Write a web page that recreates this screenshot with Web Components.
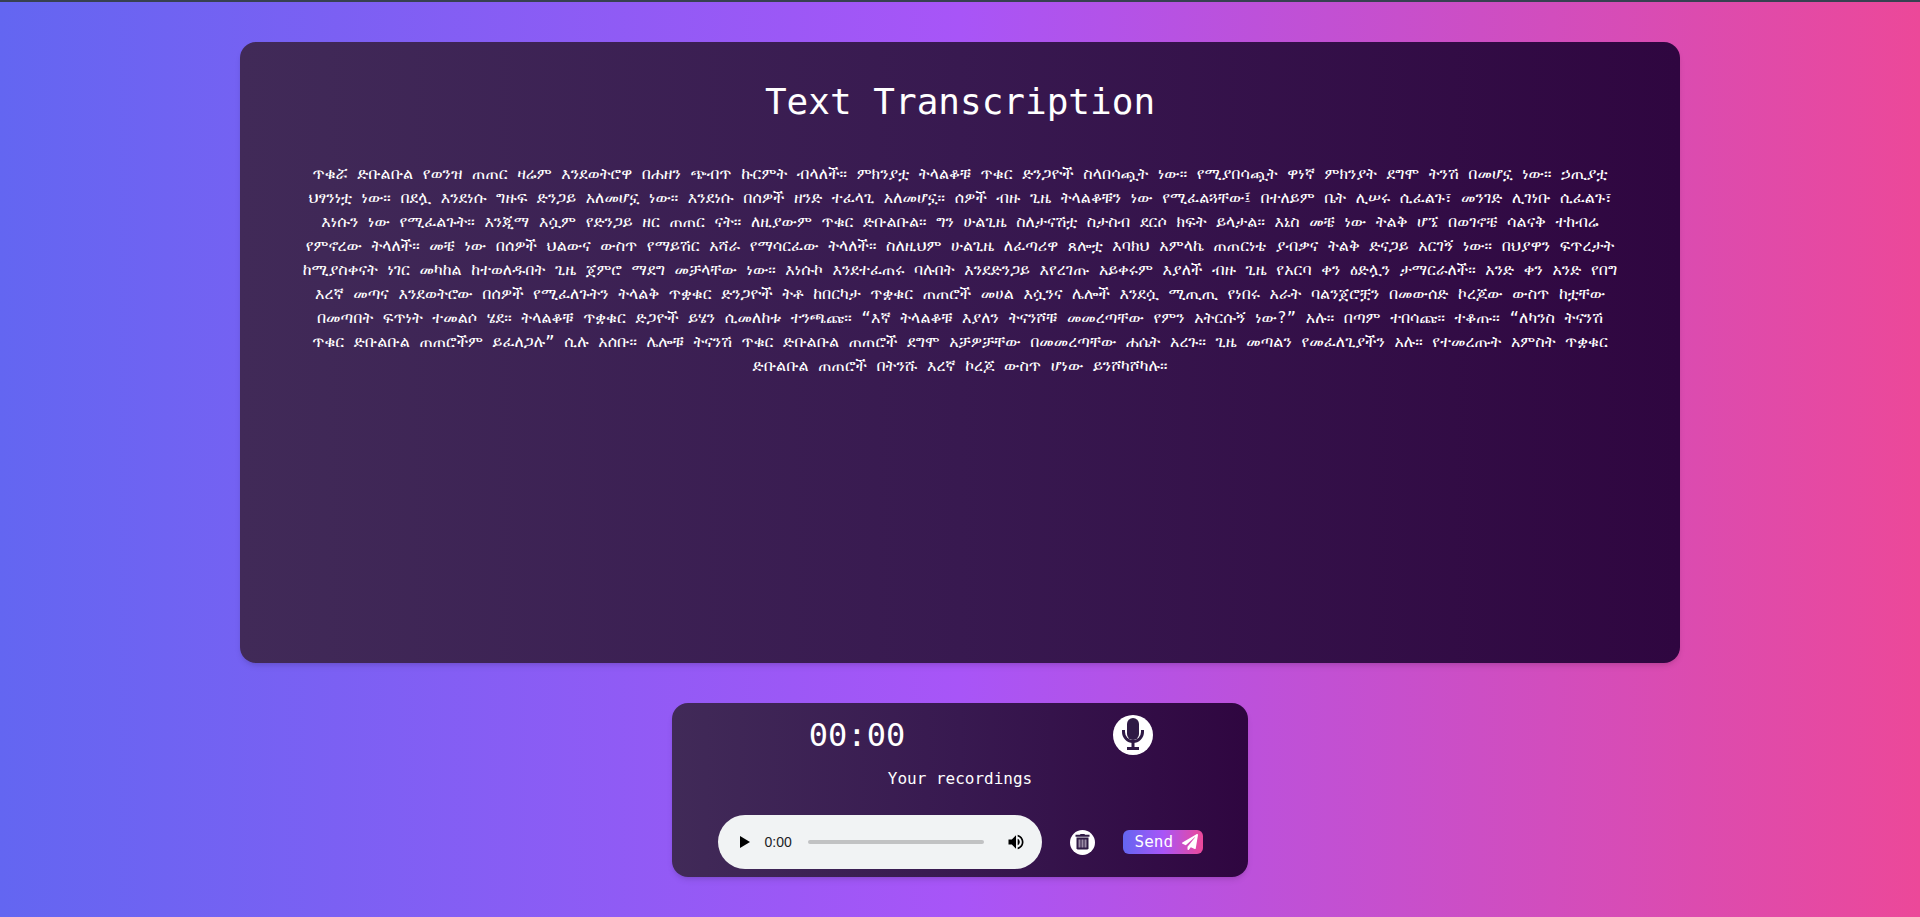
<!DOCTYPE html>
<html lang="am">
<head>
<meta charset="utf-8">
<meta name="viewport" content="width=device-width, initial-scale=1">
<title>Text Transcription</title>
<style>
  body { margin: 0; font: 16px/24px "DejaVu Sans Mono", FreeSerif, monospace; color: #fff; }
</style>
</head>
<body>
<transcription-app></transcription-app>

<template id="app-template">
  <style>
    :host {
      box-sizing: border-box; display: flex; flex-direction: column; align-items: center; gap: 40px;
      min-height: 100vh; padding: 40px 0; border-top: 2px solid #374151;
      background: linear-gradient(to right, #6366f1, #a855f7, #ec4899) border-box;
    }
    transcript-card { width: 75%; flex: 1; }
    recorder-card { width: 30%; min-width: 576px; }
  </style>
  <transcript-card>
    <span slot="title">Text Transcription</span>
    ጥቁሯ ድቡልቡል የወንዝ ጠጠር ዛሬም እንደወትሮዋ በሐዘን ጭብጥ ኩርምት ብላለች። ምክንያቷ ትላልቆቹ ጥቁር ድንጋዮች ስላበሳጯት ነው። የሚያበሳጯት ዋነኛ ምክንያት ደግሞ ትንሽ በመሆኗ ነው። ኃጢያቷ<br>
    ህፃንነቷ ነው። በደሏ እንደነሱ ግዙፍ ድንጋይ አለመሆኗ ነው። እንደነሱ በሰዎች ዘንድ ተፈላጊ አለመሆኗ። ሰዎች ብዙ ጊዜ ትላልቆቹን ነው የሚፈልጓቸው፤ በተለይም ቤት ሊሠሩ ሲፈልጉ፣ መንገድ ሊገነቡ ሲፈልጉ፣<br>
    እነሱን ነው የሚፈልጉት። እንጂማ እሷም የድንጋይ ዘር ጠጠር ናት። ለዚያውም ጥቁር ድቡልቡል። ግን ሁልጊዜ ስለታናሽቷ ስታስብ ደርሶ ክፍት ይላታል። እኔስ መቼ ነው ትልቅ ሆኜ በወገኖቼ ሳልናቅ ተከብሬ<br>
    የምኖረው ትላለች። መቼ ነው በሰዎች ህልውና ውስጥ የማይሽር አሻራ የማሳርፈው ትላለች። ስለዚህም ሁልጊዜ ለፈጣሪዋ ጸሎቷ እባክህ አምላኬ ጠጠርነቴ ያብቃና ትልቅ ድናጋይ አርገኝ ነው። በህያዋን ፍጥረታት<br>
    ከሚያስቀናት ነገር መካከል ከተወለዱበት ጊዜ ጀምሮ ማደግ መቻላቸው ነው። እነሱኮ እንደተፈጠሩ ባሉበት እንደድንጋይ እየረገጡ አይቀሩም እያለች ብዙ ጊዜ የአርባ ቀን ዕድሏን ታማርራለች። አንድ ቀን አንድ የበግ<br>
    እረኛ መጣና እንደወትሮው በሰዎች የሚፈለጉትን ትላልቅ ጥቋቁር ድንጋዮች ትቶ ከበርካታ ጥቋቁር ጠጠሮች መሀል እሷንና ሌሎች እንደሷ ሚጢጢ የነበሩ አራት ባልንጀሮቿን በመውሰድ ኮረጆው ውስጥ ከቷቸው<br>
    በመጣበት ፍጥነት ተመልሶ ሄደ። ትላልቆቹ ጥቋቁር ድጋዮች ይሄን ሲመለከቱ ተንጫጩ። “እኛ ትላልቆቹ እያለን ትናንሾቹ መመረጣቸው የምን አትርሱኝ ነው?” አሉ። በጣም ተበሳጩ። ተቆጡ። “ለካንስ ትናንሽ<br>
    ጥቁር ድቡልቡል ጠጠሮችም ይፈለጋሉ” ሲሉ አሰቡ። ሌሎቹ ትናንሽ ጥቁር ድቡልቡል ጠጠሮች ደግሞ አቻዎቻቸው በመመረጣቸው ሐሴት አረጉ። ጊዜ መጣልን የመፈለጊያችን አሉ። የተመረጡት አምስት ጥቋቁር<br>
    ድቡልቡል ጠጠሮች በትንሹ እረኛ ኮረጆ ውስጥ ሆነው ይንሾካሾካሉ።
  </transcript-card>
  <recorder-card></recorder-card>
</template>

<template id="transcript-template">
  <style>
    :host {
      box-sizing: border-box; display: block; padding: 40px; border-radius: 16px; text-align: center;
      background: linear-gradient(to right, #412a58, #381950, #2f0640);
      box-shadow: 0 4px 6px -1px rgb(0 0 0 / 10%), 0 2px 4px -2px rgb(0 0 0 / 10%);
    }
    h1 { margin: 0 0 40px; font-size: 36px; line-height: 40px; font-weight: 400; }
    p { margin: 0; }
  </style>
  <h1><slot name="title"></slot></h1>
  <p><slot></slot></p>
</template>

<template id="recorder-template">
  <style>
    :host {
      box-sizing: border-box; display: block; padding: 12px 12px 8px; border-radius: 16px;
      background: linear-gradient(to right, #412a58, #381950, #2f0640);
      box-shadow: 0 4px 6px -1px rgb(0 0 0 / 10%), 0 2px 4px -2px rgb(0 0 0 / 10%);
    }
    .row { display: flex; align-items: center; justify-content: space-around; }
    .playback { justify-content: center; gap: 28px; }
    time { width: 180px; text-align: center; font-size: 32px; line-height: 40px; }
    h2 { margin: 12px 0 24px; font-size: 16px; line-height: 24px; font-weight: 400; text-align: center; }
  </style>
  <div class="row">
    <time>00:00</time>
    <round-button size="large" label="Record">
      <svg width="24" height="34" viewBox="0 0 24 34" fill="#2f1a45"><rect x="6" y="0" width="12" height="22" rx="6"/><path d="M2.500 12v2a9.500 9.500 0 0 0 19 0v-2" fill="none" stroke="#2f1a45" stroke-width="3"/><path d="M10.500 24h3v5H18v3H6v-3h4.500z"/></svg>
    </round-button>
  </div>
  <h2>Your recordings</h2>
  <div class="row playback">
    <audio-player></audio-player>
    <round-button label="Delete">
      <svg width="15" height="17" viewBox="0 0 15 17" fill="#2f1a45"><path d="M5 .7L5.500 0h4l.5.7h4.500V2.800H.5V.7z"/><path d="M1.500 3.500h12v11l-1 1h-10l-1-1z"/><path d="M3.500 5.500h2v8h-2zM6.500 5.500h2v8h-2zM9.500 5.500h2v8h-2z" fill="#9c8da6"/></svg>
    </round-button>
    <send-button>Send</send-button>
  </div>
</template>

<template id="round-template">
  <style>
    :host { display: block; --size: 25px; }
    :host([size="large"]) { --size: 40px; }
    button {
      display: flex; align-items: center; justify-content: center; padding: 0; border: 0;
      width: var(--size); height: var(--size); border-radius: 50%; background: #fff; cursor: pointer;
    }
  </style>
  <button type="button"><slot></slot></button>
</template>

<template id="send-template">
  <style>
    :host { display: block; }
    button {
      display: flex; align-items: center; justify-content: space-between; box-sizing: border-box;
      width: 80px; height: 24px; padding: 0 5px 0 12px; border: 0; border-radius: 6px;
      font: inherit; line-height: 24px; color: #fff; cursor: pointer;
      background: linear-gradient(to right, #6366f1, #a855f7, #ec4899);
    }
  </style>
  <button type="button"><slot></slot>
    <svg width="16" height="16" viewBox="0 0 512 512" fill="#fff" aria-hidden="true"><path d="M476 3.200L12.500 270.600c-18.100 10.400-15.800 35.600 2.200 43.200L121 358.400l287.300-253.200c5.500-4.900 13.300 2.600 8.600 8.300L176 407v80.500c0 23.600 28.500 32.900 42.500 15.800L282 426l124.600 52.200c14.200 6 30.400-2.900 33-18.200l72-432C515 7.800 493.300-6.800 476 3.200z"/></svg>
  </button>
</template>

<template id="player-template">
  <style>
    :host {
      box-sizing: border-box; display: flex; align-items: center; width: 324px; height: 54px;
      padding: 0 16px; border-radius: 27px; background: #f1f3f4; color: #202124;
      font: 14px/20px "Liberation Sans", sans-serif;
    }
    button { display: flex; align-items: center; justify-content: center; width: 20px; height: 24px; padding: 0; border: 0; background: none; }
    time { margin: 0 16px 0 11px; }
    input { flex: 1; min-width: 0; margin: 0 22px 0 0; height: 4px; appearance: none; border-radius: 2px; background: #c1c2c3; }
    input::-webkit-slider-thumb { appearance: none; width: 0; height: 0; }
  </style>
  <button type="button" aria-label="Play"><svg width="20" height="20" viewBox="0 0 20 20"><path d="M6 4v12l10-6z"/></svg></button>
  <time>0:00</time>
  <input type="range" min="0" max="100" value="0" aria-label="Position">
  <button type="button" aria-label="Mute"><svg width="20" height="20" viewBox="0 0 24 24"><path d="M3 9v6h4l5 5V4L7 9H3zm13.500 3c0-1.770-1.020-3.290-2.500-4.030v8.050c1.480-.73 2.500-2.250 2.500-4.020zM14 3.230v2.060c2.890.86 5 3.540 5 6.710s-2.110 5.850-5 6.710v2.060c4.010-.91 7-4.490 7-8.770s-2.990-7.860-7-8.770z"/></svg></button>
</template>

<script>
  class TemplateElement extends HTMLElement {
    constructor() {
      super();
      const template = document.getElementById(this.constructor.template);
      this.attachShadow({ mode: 'open' }).append(template.content.cloneNode(true));
    }
  }
  class RoundButton extends TemplateElement {
    static template = 'round-template';
    connectedCallback() {
      this.shadowRoot.querySelector('button').setAttribute('aria-label', this.getAttribute('label'));
    }
  }
  class SendButton extends TemplateElement { static template = 'send-template'; }
  class AudioPlayer extends TemplateElement { static template = 'player-template'; }
  class TranscriptCard extends TemplateElement { static template = 'transcript-template'; }
  class RecorderCard extends TemplateElement { static template = 'recorder-template'; }
  class TranscriptionApp extends TemplateElement { static template = 'app-template'; }
  customElements.define('round-button', RoundButton);
  customElements.define('send-button', SendButton);
  customElements.define('audio-player', AudioPlayer);
  customElements.define('transcript-card', TranscriptCard);
  customElements.define('recorder-card', RecorderCard);
  customElements.define('transcription-app', TranscriptionApp);
</script>
</body>
</html>
